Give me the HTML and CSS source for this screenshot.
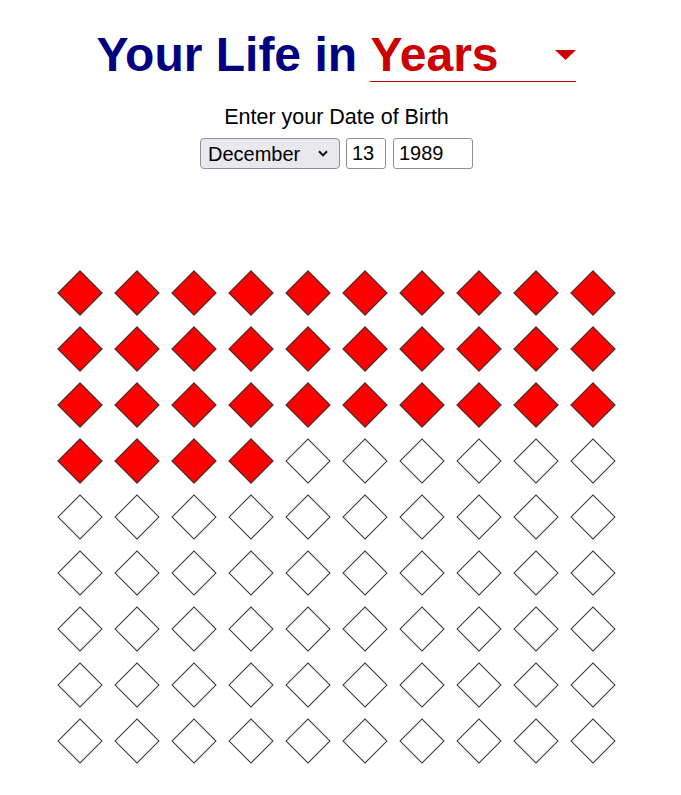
FILE: index.html
```html
<!DOCTYPE html>
<html lang="en">
<head>
<meta charset="utf-8">
<title>Your Life in Years</title>
<link rel="stylesheet" href="styles.css">
</head>
<body>
<main class="page">
  <h1 class="title"><span class="title-text">Your Life in</span> <span class="unit-picker"><span class="unit-label">Years</span><svg class="unit-arrow" width="21" height="10" viewBox="0 0 21 10"><polygon points="0,0 21,0 10.5,10"/></svg></span></h1>
  <section class="dob">
    <p class="dob-label">Enter your Date of Birth</p>
    <div class="dob-fields">
      <div class="month-wrap">
        <select class="month-select">
          <option>January</option><option>February</option><option>March</option><option>April</option>
          <option>May</option><option>June</option><option>July</option><option>August</option>
          <option>September</option><option>October</option><option>November</option><option selected>December</option>
        </select>
        <svg class="month-chevron" width="10" height="7" viewBox="0 0 10 7"><polyline points="1,1.2 5,5.4 9,1.2"/></svg>
      </div>
      <input class="field day-field" type="text" value="13">
      <input class="field year-field" type="text" value="1989">
    </div>
  </section>
  <div class="life-grid">
    <div class="cell"><div class="diamond lived"></div></div><div class="cell"><div class="diamond lived"></div></div><div class="cell"><div class="diamond lived"></div></div><div class="cell"><div class="diamond lived"></div></div><div class="cell"><div class="diamond lived"></div></div><div class="cell"><div class="diamond lived"></div></div><div class="cell"><div class="diamond lived"></div></div><div class="cell"><div class="diamond lived"></div></div><div class="cell"><div class="diamond lived"></div></div><div class="cell"><div class="diamond lived"></div></div>
    <div class="cell"><div class="diamond lived"></div></div><div class="cell"><div class="diamond lived"></div></div><div class="cell"><div class="diamond lived"></div></div><div class="cell"><div class="diamond lived"></div></div><div class="cell"><div class="diamond lived"></div></div><div class="cell"><div class="diamond lived"></div></div><div class="cell"><div class="diamond lived"></div></div><div class="cell"><div class="diamond lived"></div></div><div class="cell"><div class="diamond lived"></div></div><div class="cell"><div class="diamond lived"></div></div>
    <div class="cell"><div class="diamond lived"></div></div><div class="cell"><div class="diamond lived"></div></div><div class="cell"><div class="diamond lived"></div></div><div class="cell"><div class="diamond lived"></div></div><div class="cell"><div class="diamond lived"></div></div><div class="cell"><div class="diamond lived"></div></div><div class="cell"><div class="diamond lived"></div></div><div class="cell"><div class="diamond lived"></div></div><div class="cell"><div class="diamond lived"></div></div><div class="cell"><div class="diamond lived"></div></div>
    <div class="cell"><div class="diamond lived"></div></div><div class="cell"><div class="diamond lived"></div></div><div class="cell"><div class="diamond lived"></div></div><div class="cell"><div class="diamond lived"></div></div><div class="cell"><div class="diamond"></div></div><div class="cell"><div class="diamond"></div></div><div class="cell"><div class="diamond"></div></div><div class="cell"><div class="diamond"></div></div><div class="cell"><div class="diamond"></div></div><div class="cell"><div class="diamond"></div></div>
    <div class="cell"><div class="diamond"></div></div><div class="cell"><div class="diamond"></div></div><div class="cell"><div class="diamond"></div></div><div class="cell"><div class="diamond"></div></div><div class="cell"><div class="diamond"></div></div><div class="cell"><div class="diamond"></div></div><div class="cell"><div class="diamond"></div></div><div class="cell"><div class="diamond"></div></div><div class="cell"><div class="diamond"></div></div><div class="cell"><div class="diamond"></div></div>
    <div class="cell"><div class="diamond"></div></div><div class="cell"><div class="diamond"></div></div><div class="cell"><div class="diamond"></div></div><div class="cell"><div class="diamond"></div></div><div class="cell"><div class="diamond"></div></div><div class="cell"><div class="diamond"></div></div><div class="cell"><div class="diamond"></div></div><div class="cell"><div class="diamond"></div></div><div class="cell"><div class="diamond"></div></div><div class="cell"><div class="diamond"></div></div>
    <div class="cell"><div class="diamond"></div></div><div class="cell"><div class="diamond"></div></div><div class="cell"><div class="diamond"></div></div><div class="cell"><div class="diamond"></div></div><div class="cell"><div class="diamond"></div></div><div class="cell"><div class="diamond"></div></div><div class="cell"><div class="diamond"></div></div><div class="cell"><div class="diamond"></div></div><div class="cell"><div class="diamond"></div></div><div class="cell"><div class="diamond"></div></div>
    <div class="cell"><div class="diamond"></div></div><div class="cell"><div class="diamond"></div></div><div class="cell"><div class="diamond"></div></div><div class="cell"><div class="diamond"></div></div><div class="cell"><div class="diamond"></div></div><div class="cell"><div class="diamond"></div></div><div class="cell"><div class="diamond"></div></div><div class="cell"><div class="diamond"></div></div><div class="cell"><div class="diamond"></div></div><div class="cell"><div class="diamond"></div></div>
    <div class="cell"><div class="diamond"></div></div><div class="cell"><div class="diamond"></div></div><div class="cell"><div class="diamond"></div></div><div class="cell"><div class="diamond"></div></div><div class="cell"><div class="diamond"></div></div><div class="cell"><div class="diamond"></div></div><div class="cell"><div class="diamond"></div></div><div class="cell"><div class="diamond"></div></div><div class="cell"><div class="diamond"></div></div><div class="cell"><div class="diamond"></div></div>
  </div>
</main>
</body>
</html>
```
FILE: styles.css
```css
html, body {
  background: #ffffff;
}
body {
  margin: 0;
  font-family: "Liberation Sans", Arial, sans-serif;
  color: #000000;
}
.page {
  padding: 0 16px 0 8px;
}
.title {
  margin: 29px 0 0;
  font-size: 48px;
  line-height: 52px;
  font-weight: bold;
  color: #000080;
  text-align: center;
}
.unit-picker {
  display: inline-flex;
  align-items: center;
  justify-content: space-between;
  width: 206px;
  border-bottom: 1px solid #cc0000;
  color: #cc0000;
  vertical-align: baseline;
  text-align: left;
}
.unit-label {
  line-height: 52px;
}
.unit-arrow {
  display: block;
  fill: #cc0000;
}
.dob {
  text-align: center;
}
.dob-label {
  margin: 23px 0 0;
  font-size: 21.5px;
  line-height: 25px;
}
.dob-fields {
  display: flex;
  justify-content: center;
  margin-top: 8px;
}
.month-wrap {
  position: relative;
  width: 140px;
  height: 31px;
}
.month-select {
  appearance: none;
  -webkit-appearance: none;
  box-sizing: border-box;
  width: 140px;
  height: 31px;
  margin: 0;
  padding: 0 0 0 7px;
  font-family: "Liberation Sans", Arial, sans-serif;
  font-size: 20px;
  color: #000000;
  background: #e9e9ed;
  border: 1px solid #8f8f9d;
  border-radius: 4px;
}
.month-chevron {
  position: absolute;
  right: 12px;
  top: 12px;
  fill: none;
  stroke: #111111;
  stroke-width: 2;
  pointer-events: none;
}
.field {
  box-sizing: border-box;
  height: 31px;
  margin: 0;
  padding: 0 0 0 5px;
  font-family: "Liberation Sans", Arial, sans-serif;
  font-size: 20px;
  color: #000000;
  background: #ffffff;
  border: 1px solid #8f8f9d;
  border-radius: 3px;
}
.day-field {
  width: 40px;
  margin-left: 6px;
}
.year-field {
  width: 80px;
  margin-left: 7px;
}
.life-grid {
  display: grid;
  grid-template-columns: repeat(10, 57px);
  grid-auto-rows: 56px;
  justify-content: center;
  margin-top: 95.5px;
}
.cell {
  display: flex;
  align-items: center;
  justify-content: center;
}
.diamond {
  box-sizing: border-box;
  width: 32px;
  height: 32px;
  border: 1px solid #333333;
  background: #ffffff;
  transform: rotate(45deg);
}
.diamond.lived {
  background: #ff0000;
}
```
